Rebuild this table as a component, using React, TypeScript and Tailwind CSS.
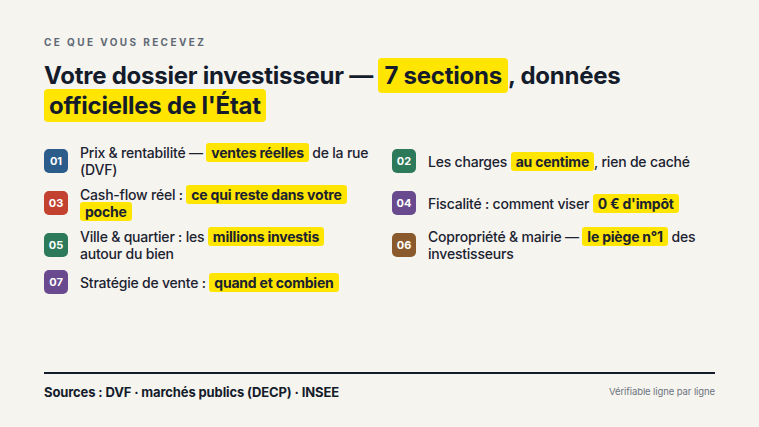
import React from "react";

const font = { fontFamily: "Inter, 'Noto Sans', sans-serif" };

function Hl({ children }: { children: React.ReactNode }) {
  return (
    <span className="bg-[#ffe500] rounded-[3px] px-[5px] py-[1px] font-bold [box-decoration-break:clone] [-webkit-box-decoration-break:clone]">
      {children}
    </span>
  );
}

function Item({ n, color, children }: { n: string; color: string; children: React.ReactNode }) {
  return (
    <div className="flex items-center gap-[12px]">
      <div className={`w-6 h-6 shrink-0 rounded-[5px] ${color} text-white text-[11px] font-bold flex items-center justify-center`}>
        {n}
      </div>
      <div className="text-[14px] leading-[17px] text-[#1b2230] font-medium tracking-[-0.015em]">{children}</div>
    </div>
  );
}

export default function App() {
  return (
    <div style={font} className="w-[759px] h-[427px] bg-[#f6f4ef] px-[44px] pt-[36px] pb-[25px] flex flex-col text-[#141c2b]">
      <div className="text-[10px] font-bold tracking-[0.24em] text-[#5f6975] leading-[12px]">CE QUE VOUS RECEVEZ</div>
      <h1 className="mt-[13px] text-[24px] leading-[30px] font-bold tracking-[-0.01em] text-[#141c2b]">
        Votre dossier investisseur —{" "}
        <span className="bg-[#ffe500] rounded-[4px] px-[6px] py-[3px] [box-decoration-break:clone]">7 sections</span>
        , données{" "}
        <span className="bg-[#ffe500] rounded-[4px] px-[5px] py-[2px] [box-decoration-break:clone]">officielles de l'État</span>
      </h1>
      <div className="mt-[23px] grid grid-cols-[332px_1fr] gap-x-4 gap-y-[8px]">
        <Item n="01" color="bg-[#2b5c8a]">
          Prix &amp; rentabilité — <Hl>ventes réelles</Hl> de la rue (DVF)
        </Item>
        <Item n="02" color="bg-[#2c7a5a]">
          Les charges <Hl>au centime</Hl>, rien de caché
        </Item>
        <Item n="03" color="bg-[#c2412f]">
          Cash-flow réel : <Hl>ce qui reste dans votre poche</Hl>
        </Item>
        <Item n="04" color="bg-[#6a4a8e]">
          Fiscalité : comment viser <Hl>0 € d'impôt</Hl>
        </Item>
        <Item n="05" color="bg-[#2c7a5a]">
          Ville &amp; quartier : les <Hl>millions investis</Hl>
          <br />
          autour du bien
        </Item>
        <Item n="06" color="bg-[#8a5a2c]">
          Copropriété &amp; mairie — <Hl>le piège n°1</Hl> des investisseurs
        </Item>
        <Item n="07" color="bg-[#6a4a8e]">
          Stratégie de vente : <Hl>quand et combien</Hl>
        </Item>
      </div>
      <div className="mt-auto border-t-2 border-[#141c2b] pt-[9px] flex items-center justify-between">
        <div className="text-[13px] font-bold tracking-[-0.01em] text-[#141c2b]">Sources : DVF · marchés publics (DECP) · INSEE</div>
        <div className="text-[9.5px] tracking-[-0.01em] text-[#6b7380]">Vérifiable ligne par ligne</div>
      </div>
    </div>
  );
}
